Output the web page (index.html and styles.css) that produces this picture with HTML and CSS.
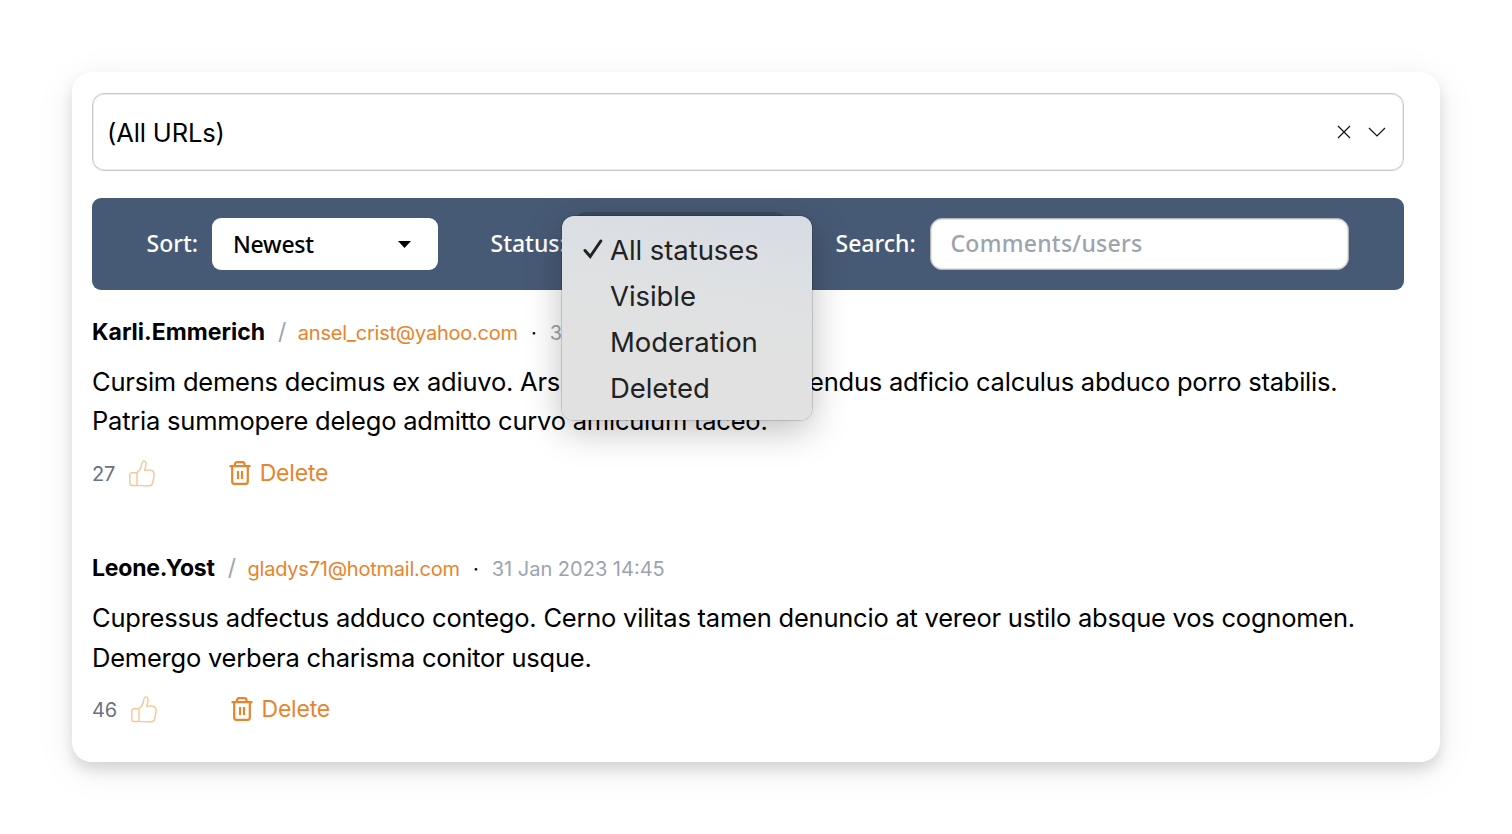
FILE: index.html
```html
<!DOCTYPE html>
<html lang="en">
<head>
<meta charset="utf-8">
<title>Comments</title>
<link rel="stylesheet" href="styles.css">
</head>
<body>
<svg class="defs" aria-hidden="true">
  <symbol id="thumb" viewBox="0 0 26 27">
    <path d="M8 12.5 C10.5 11 11.5 8.5 12.3 6.2 C12.8 4.6 12.8 1 14.6 .9 C17.4 .8 17.3 3.8 16.8 5.8 L15.7 10.2 C18 10.2 20.6 9.7 22.6 10.4 C25.6 11.4 25.3 14 24.9 16.5 L23.8 22.5 C23.3 24.8 22.6 25.6 20.4 25.7 C16 26 11.5 25.8 8 25.4 Z M8 12.8 H3.2 Q.8 12.8 .8 15 V23.2 Q.8 25.5 3.2 25.5 H8"/>
  </symbol>
  <symbol id="trash" viewBox="0 0 22 24">
    <path d="M.5 5.2 H21.5 M3.2 5.2 V20.4 Q3.2 22.8 5.6 22.8 H16.4 Q18.8 22.8 18.8 20.4 V5.2 M6 5 V3.4 Q6 1.2 8.2 1.2 H13.3 Q15.5 1.2 15.5 3.4 V5 M9 10 V18 M13 10 V18"/>
  </symbol>
</svg>
<main class="card">
  <div class="url-select">
    <span class="url-value">(All URLs)</span>
    <svg class="icon-clear" viewBox="0 0 14 14"><path d="M1 1 L13 13 M13 1 L1 13"/></svg>
    <svg class="icon-chevron" viewBox="0 0 18 10"><path d="M1 1 L9 9 L17 1"/></svg>
  </div>

  <div class="toolbar">
    <label class="label sort-label">Sort:</label>
    <div class="select"><span class="select-value">Newest</span><svg viewBox="0 0 13 7"><path d="M0 0 H13 L6.5 7 Z"/></svg></div>
    <label class="label status-label">Status:</label>
    <div class="select status-select">
      <div class="menu">
        <div class="option"><svg viewBox="0 0 20 20"><path d="M2 11.5 L7.2 17.5 L17.8 2"/></svg>All statuses</div>
        <div class="option">Visible</div>
        <div class="option">Moderation</div>
        <div class="option">Deleted</div>
      </div>
    </div>
    <label class="label search-label">Search:</label>
    <div class="search"><span class="placeholder">Comments/users</span></div>
  </div>

  <article class="comment">
    <header class="meta">
      <span class="name">Karli.Emmerich</span><span class="slash">/</span><span class="email">ansel_crist@yahoo.com</span><span class="dot">·</span><span class="date">3</span>
    </header>
    <p class="body">Cursim demens decimus ex adiuvo. Ars<span class="gap"></span>endus adficio calculus abduco porro stabilis.<br>Patria summopere delego admitto curvo amiculum taceo.</p>
    <footer class="actions">
      <span class="count">27</span><svg class="thumb"><use href="#thumb"/></svg><svg class="trash"><use href="#trash"/></svg><span class="delete">Delete</span>
    </footer>
  </article>

  <article class="comment">
    <header class="meta">
      <span class="name name-tight">Leone.Yost</span><span class="slash">/</span><span class="email">gladys71@hotmail.com</span><span class="dot">·</span><span class="date">31 Jan 2023 14:45</span>
    </header>
    <p class="body body-loose">Cupressus adfectus adduco contego. Cerno vilitas tamen denuncio at vereor ustilo absque vos cognomen.<br>Demergo verbera charisma conitor usque.</p>
    <footer class="actions">
      <span class="count">46</span><svg class="thumb"><use href="#thumb"/></svg><svg class="trash"><use href="#trash"/></svg><span class="delete">Delete</span>
    </footer>
  </article>
</main>
</body>
</html>
```

FILE: styles.css
```css
* { box-sizing: border-box; }
body { margin: 0; padding: 72px; background: #fff; color: #000; font-family: Inter, "Liberation Sans", sans-serif; }
.defs { position: absolute; width: 0; height: 0; }
.card { width: 1368px; height: 690px; padding: 21px 36px 0 20px; border-radius: 20px; background: #fff; box-shadow: 0 8px 14px rgba(0,0,0,.13), 0 8px 40px rgba(0,0,0,.07); }

.url-select { display: flex; align-items: center; height: 78px; padding: 0 17.5px 0 14px; border: 1px solid #c8c8c8; border-radius: 12px; box-shadow: inset 0 0 0 1px #ececec; }
.url-value { flex: 1; font-size: 25.5px; letter-spacing: -.12px; }
.icon-clear { width: 14px; height: 14px; margin-right: 17px; fill: none; stroke: #111; stroke-width: 1.2; }
.icon-chevron { width: 18px; height: 10px; fill: none; stroke: #111; stroke-width: 1.2; }

.toolbar { display: flex; align-items: center; height: 92px; margin-top: 26.5px; border-radius: 9px; background: #475a75; font-family: "Noto Sans", sans-serif; font-size: 23px; font-weight: 500; }
.label { padding-bottom: 2px; color: #fff; }
.sort-label { width: 120px; padding-left: 54.5px; }
.select { display: flex; align-items: center; justify-content: space-between; width: 226px; height: 52px; padding: 0 27.5px 0 21px; border-radius: 9px; background: #fff; }
.select > svg { width: 13px; height: 7px; margin-top: 2px; }
.select-value { letter-spacing: -.25px; }
.status-label { width: 140px; padding-left: 52.5px; }
.status-select { position: relative; width: 205px; box-shadow: 0 0 0 6px #3b4b62; }
.search-label { width: 147px; padding-left: 52.5px; }
.search { display: flex; align-items: center; width: 419px; height: 52px; padding: 0 0 2px 19.5px; border: 1px solid #b4b4b4; border-radius: 12px; background: #fff; color: #9ca3af; box-shadow: inset 0 0 0 1px #e4e4e4; }
.placeholder { letter-spacing: .25px; }

.menu { position: absolute; z-index: 1; left: -16px; top: -2px; width: 250px; height: 204px; padding-top: 11px; border-radius: 12px; background: linear-gradient(190deg, #d7dbe3, #dde0e3 28%, #e0e1e2 50%, #e1e1e1 60%); box-shadow: 0 0 0 1px rgba(0,0,0,.14), 0 10px 36px rgba(0,0,0,.26); color: #222; font-family: Inter, sans-serif; font-size: 27.5px; font-weight: 400; }
.option { position: relative; height: 46px; padding-left: 48px; line-height: 46px; letter-spacing: -.06px; }
.option svg { position: absolute; left: 20.5px; top: 12px; width: 20px; height: 20px; fill: none; stroke: #222; stroke-width: 3; stroke-linecap: round; }

.comment { height: 236px; padding-top: 22px; }
.meta { display: flex; align-items: baseline; height: 40px; line-height: 40px; font-size: 20px; }
.name { font-size: 23px; font-weight: 700; }
.name-tight { letter-spacing: -.2px; }
.slash { margin: 0 11.5px 0 13px; font-size: 23px; color: #9ca3af; }
.email { color: #e8842c; letter-spacing: -.22px; }
.dot { margin: 0 13px; }
.date { color: #9ca3af; }
.body { height: 79px; margin: 10px 0 0; font-size: 25.5px; line-height: 39.5px; letter-spacing: -.22px; white-space: nowrap; }
.body-loose { line-height: 40px; }
.gap { display: inline-block; width: 249px; }
.actions { display: flex; align-items: center; height: 40px; margin-top: 12px; }
.count { padding-top: 2px; font-size: 20px; letter-spacing: -.1px; color: #6b7280; }
.thumb { width: 26px; height: 27px; margin: 1px 0 0 13.4px; fill: none; stroke: #f7c596; stroke-width: 1.4; }
.trash { width: 22px; height: 24px; margin-left: 74px; fill: none; stroke: #e8842c; stroke-width: 2.2; }
.delete { margin-left: 9px; font-size: 23px; letter-spacing: -.2px; color: #e8842c; }
```
